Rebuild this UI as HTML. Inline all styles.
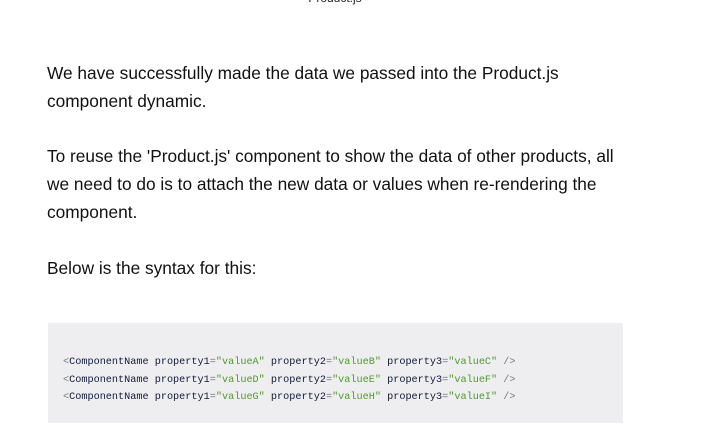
<!DOCTYPE html>
<html><head><style>
body{margin:0;width:712px;height:435px;overflow:hidden;background:#fff;font-family:"Liberation Sans",sans-serif;color:#1a1a1a;position:relative}
.cap{position:absolute;top:-9px;left:0;width:670px;text-align:center;font-size:12px;color:#222}
p{position:absolute;left:47px;margin:0;font-size:17.3px;line-height:28px;width:640px;color:#111}
.code{position:absolute;left:48px;top:323px;width:575px;height:100px;background:#eeeef0}
pre{position:absolute;left:63px;top:354px;margin:0;font-family:"Liberation Mono",monospace;font-size:10.2px;line-height:17.5px;color:#101a3a}
.s{color:#4f9a2a}.g{color:#777}
</style></head><body>
<div class="cap">Product.js</div>
<p style="top:59px">We have successfully made the data we passed into the Product.js<br>component dynamic.</p>
<p style="top:142px">To reuse the 'Product.js' component to show the data of other products, all<br>we need to do is to attach the new data or values when re-rendering the<br>component.</p>
<p style="top:254px">Below is the syntax for this:</p>
<div class="code"></div>
<pre><span class="g">&lt;</span>ComponentName property1<span class="g">=</span><span class="s">"valueA"</span> property2<span class="g">=</span><span class="s">"valueB"</span> property3<span class="g">=</span><span class="s">"valueC"</span> <span class="g">/&gt;</span>
<span class="g">&lt;</span>ComponentName property1<span class="g">=</span><span class="s">"valueD"</span> property2<span class="g">=</span><span class="s">"valueE"</span> property3<span class="g">=</span><span class="s">"valueF"</span> <span class="g">/&gt;</span>
<span class="g">&lt;</span>ComponentName property1<span class="g">=</span><span class="s">"valueG"</span> property2<span class="g">=</span><span class="s">"valueH"</span> property3<span class="g">=</span><span class="s">"valueI"</span> <span class="g">/&gt;</span></pre>
</body></html>
